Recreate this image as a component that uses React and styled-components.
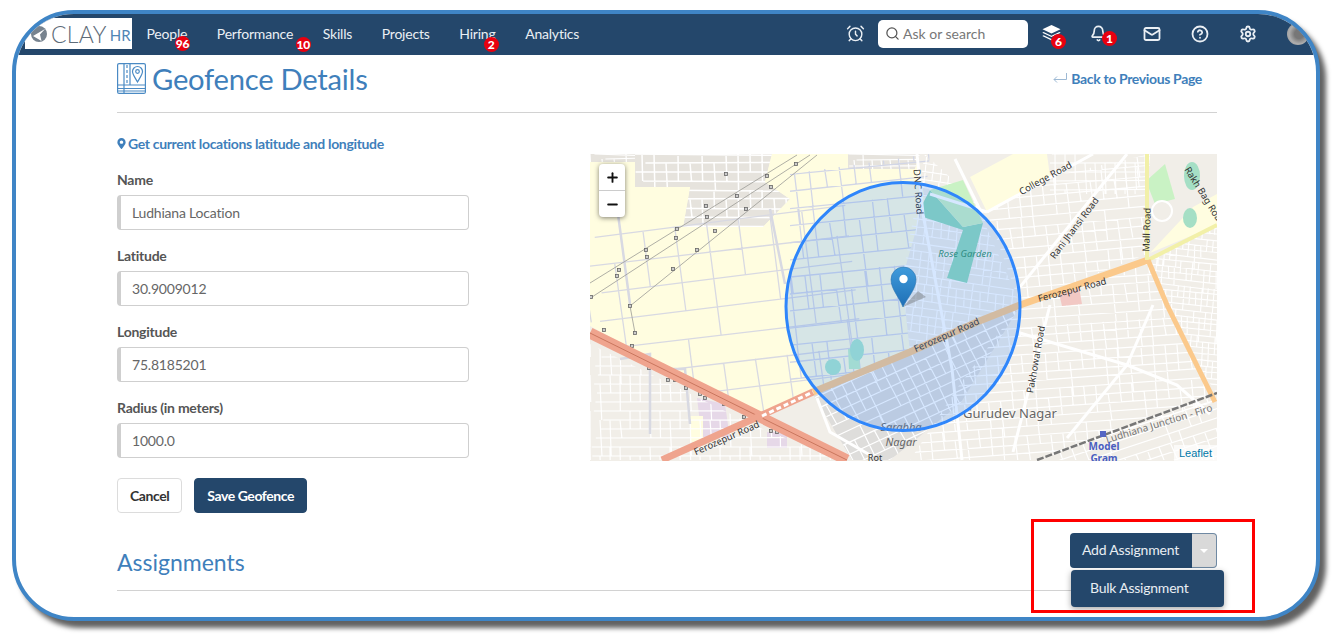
import React from "react"
import styled, { createGlobalStyle } from "styled-components"
import { AlarmClock, Bell, CircleHelp, Mail, Minus, Plus, Search, Settings } from "lucide-react"
import { FaMapMarkerAlt } from "react-icons/fa"

const navy = "#24476b"
const blue = "#3f7fbb"

const GlobalStyle = createGlobalStyle`
  html, body {
    margin: 0;
    background: #fff;
    font-family: "Lato", "Open Sans", sans-serif;
  }
`

const Page = styled.div`
  width: 1336px;
  height: 637px;
  padding: 10px 0 0 12px;
  box-sizing: border-box;
  overflow: hidden;
`

const Frame = styled.div`
  width: 1308px;
  height: 611px;
  box-sizing: border-box;
  border: 4px solid #3f85c6;
  border-radius: 62px;
  background: #fff;
  box-shadow: 6px 7px 5px rgba(0, 0, 0, 0.62);
  overflow: hidden;
`

const Nav = styled.header`
  display: flex;
  align-items: center;
  height: 41px;
  padding: 0 0 2px 9px;
  box-sizing: border-box;
  background: ${navy};
  color: #eaeff4;
  font-size: 14px;
  letter-spacing: -0.2px;
`

const Logo = styled.div`
  display: flex;
  align-items: center;
  width: 107px;
  height: 31px;
  padding-left: 6px;
  box-sizing: border-box;
  background: #fff;
  margin-right: 14.5px;
  letter-spacing: 0;
`

const LogoClay = styled.span`
  margin-left: 4px;
  font-size: 23px;
  font-weight: 300;
  letter-spacing: 0.3px;
  color: #5d6b78;
`

const LogoHr = styled.span`
  margin-left: 3px;
  margin-top: 3px;
  font-size: 15px;
  font-weight: 400;
  color: #4f86b5;
`

const NavLinks = styled.nav`
  display: flex;
  gap: 29.6px;
`

const NavLink = styled.span`
  position: relative;
  line-height: 20px;
`

const Badge = styled.span`
  position: absolute;
  right: ${p => p.$right}px;
  top: ${p => p.$top}px;
  min-width: 15px;
  height: 15px;
  padding: 0 1px;
  box-sizing: border-box;
  border-radius: 8px;
  background: #e8000f;
  color: #fff;
  font-size: 12px;
  font-weight: 900;
  letter-spacing: -0.2px;
  line-height: 15px;
  text-align: center;
`

const NavTools = styled.div`
  display: flex;
  align-items: center;
  margin-left: auto;
  margin-right: -4px;
`

const ToolSlot = styled.span`
  position: relative;
  display: flex;
  align-items: center;
  justify-content: center;
  width: ${p => p.$width || 48}px;
  padding-right: ${p => p.$shift || 0}px;
  box-sizing: border-box;
`

const SearchBox = styled.div`
  display: flex;
  align-items: center;
  gap: 3px;
  width: 150px;
  height: 28px;
  padding-left: 7px;
  margin: 0 -1px 0 13px;
  box-sizing: border-box;
  border-radius: 5px;
  background: #fff;
  color: #777;
  font-size: 14px;
  letter-spacing: 0;
`

const Avatar = styled.span`
  width: 22px;
  height: 22px;
  margin-left: 4px;
  border-radius: 50%;
  background: radial-gradient(circle at 55% 50%, #777 0 28%, #adadad 60%, #949494);
`

const Content = styled.main`
  padding: 0 99px 0 101px;
`

const TitleRow = styled.div`
  display: flex;
  align-items: center;
  justify-content: space-between;
  height: 58px;
  padding: 0 15px 11px 0;
  box-sizing: border-box;
  border-bottom: 1px solid #d2d2d2;
`

const Title = styled.h1`
  display: flex;
  align-items: center;
  gap: 6px;
  margin: 0;
  color: ${blue};
  font-size: 29.2px;
  font-weight: 400;
  letter-spacing: -0.25px;
`

const BackLink = styled.a`
  display: flex;
  align-items: center;
  gap: 4px;
  color: ${blue};
  font-size: 14px;
  font-weight: 700;
  letter-spacing: -0.35px;
`

const Columns = styled.div`
  display: flex;
  justify-content: space-between;
`

const FormColumn = styled.form`
  width: 352px;
  margin: 20px 0 0;
`

const LocateLink = styled.a`
  display: flex;
  align-items: center;
  gap: 1px;
  height: 20px;
  margin-bottom: 17px;
  color: ${blue};
  font-size: 14px;
  font-weight: 700;
  letter-spacing: -0.34px;

  svg {
    margin-left: -1px;
  }
`

const Label = styled.label`
  display: block;
  margin: 0 0 5px;
  color: #555;
  font-size: 14px;
  font-weight: 700;
  line-height: 20px;
  letter-spacing: -0.25px;
`

const TextInput = styled.input`
  display: block;
  width: 100%;
  height: 35px;
  padding: 0 0 0 11px;
  margin-bottom: 16px;
  box-sizing: border-box;
  border: 1px solid #cfcfcf;
  border-left: 4px solid #cfcfcf;
  border-radius: 4px;
  color: #666;
  font: 400 14px "Lato", sans-serif;
  letter-spacing: -0.2px;
`

const Buttons = styled.div`
  display: flex;
  gap: 12px;
  margin-top: 20px;
`

const Button = styled.button`
  height: 35px;
  padding: 0 12px;
  border: 1px solid ${p => (p.$primary ? navy : "#dcdcdc")};
  border-radius: 4px;
  background: ${p => (p.$primary ? navy : "#fff")};
  color: ${p => (p.$primary ? "#fff" : "#333")};
  font: 700 14px "Lato", sans-serif;
  letter-spacing: -0.43px;
`

const MapBox = styled.div`
  position: relative;
  width: 627px;
  height: 307px;
  margin-top: 41px;
  overflow: hidden;
  background: #f1eee8;

  svg {
    display: block;
  }
`

const ZoomControl = styled.div`
  position: absolute;
  left: 9px;
  top: 10px;
  width: 26px;
  border-radius: 4px;
  background: #fff;
  box-shadow: 0 1px 5px rgba(0, 0, 0, 0.5);

  svg {
    color: #111;
  }
`

const ZoomButton = styled.span`
  display: flex;
  align-items: center;
  justify-content: center;
  height: 26px;
  border-bottom: ${p => (p.$last ? "none" : "1px solid #ccc")};
`

const Attribution = styled.a`
  position: absolute;
  right: 0;
  bottom: 0;
  padding: 0 5px;
  background: rgba(255, 255, 255, 0.7);
  color: #0078a8;
  font: 11px/16px "Liberation Sans", sans-serif;
`

const SectionRow = styled.div`
  display: flex;
  justify-content: space-between;
  height: 58px;
  margin-top: 20px;
  box-sizing: border-box;
  border-bottom: 1px solid #d2d2d2;
`

const SectionTitle = styled.h2`
  align-self: flex-end;
  margin: 0 0 13px;
  color: ${blue};
  font-size: 23px;
  font-weight: 400;
  line-height: 30px;
`

const SplitButton = styled.div`
  position: relative;
  display: flex;
  height: 35px;
`

const SplitMain = styled.span`
  display: flex;
  align-items: center;
  width: 122px;
  padding: 0 0 2px 12px;
  box-sizing: border-box;
  border-radius: 4px 0 0 4px;
  background: ${navy};
  color: #e9eef3;
  font-size: 14px;
  letter-spacing: -0.2px;
`

const SplitCaret = styled.span`
  display: flex;
  align-items: center;
  justify-content: center;
  width: 25px;
  box-sizing: border-box;
  border: 1px solid #6f89a3;
  border-left: none;
  border-radius: 0 4px 4px 0;
  background: #d9d9d9;

  &::after {
    content: "";
    border: 4px solid transparent;
    border-top-color: #fff;
    border-bottom: none;
  }
`

const DropMenu = styled.div`
  position: absolute;
  left: 1px;
  top: 37px;
  width: 153px;
  height: 37px;
  padding-left: 19px;
  box-sizing: border-box;
  border-radius: 4px;
  background: ${navy};
  box-shadow: 0 2px 6px rgba(0, 0, 0, 0.35);
  color: #e9eef3;
  font-size: 14px;
  line-height: 36px;
  letter-spacing: -0.22px;
`

const Highlight = styled.div`
  position: absolute;
  left: -39px;
  top: -14px;
  width: 224px;
  height: 94px;
  box-sizing: border-box;
  border: 3.5px solid #ff0000;
  pointer-events: none;
`

const MapText = styled.text`
  font-family: "Noto Sans", "Open Sans", sans-serif;
  font-size: ${p => p.$size || 9.5}px;
  font-style: ${p => (p.$italic ? "italic" : "normal")};
  font-weight: ${p => (p.$bold ? 700 : 400)};
  fill: ${p => p.$color || "#333"};
  stroke: ${p => p.$halo || "none"};
  stroke-width: 2px;
  paint-order: stroke;
  text-anchor: middle;
`

// small repeatable noise so the street grid stays the same on every load
const noise = n => {
  const v = Math.sin(n * 127.1 + 11.7) * 43758.5453
  return v - Math.floor(v)
}

const gridPath = (x, y, w, h, sx, sy, seed = 1) => {
  let d = ""
  let i = 0
  for (let py = y; py < y + h; py += sy) {
    i++
    const tilt = noise(seed + i) * 3 - 1.5
    const start = x + noise(seed + i * 2) * sx * 1.5
    d += `M${start} ${py}L${x + w} ${py + tilt}`
  }
  for (let px = x; px < x + w; px += sx) {
    for (let py = y; py < y + h; py += sy * 4) {
      i++
      const from = py + Math.floor(noise(seed + i) * 2) * sy
      const to = from + (2 + Math.floor(noise(seed + i * 3) * 3)) * sy
      d += `M${px} ${from}L${px + noise(seed + i) * 2} ${to}`
    }
  }
  return d
}

const polyPoints = pts => pts.map(p => p.join(",")).join(" ")

const yellowAreas = [
  [[0, 0], [325, 0], [335, 45], [312, 125], [320, 198], [223, 238], [170, 264], [0, 172]],
  [[380, 23], [423, 0], [457, 0], [460, 23], [397, 58]],
  [[560, 99], [603, 53], [627, 40], [627, 71]],
]

const blocks = [
  { id: "a", pts: [[45, 0], [182, 0], [175, 28], [200, 45], [173, 73], [93, 73], [100, 33], [45, 33]], x: 40, y: 0, w: 170, h: 80, sx: 12, sy: 9, color: "#fff", sw: 1.5 },
  { id: "b", pts: [[258, 0], [330, 0], [325, 15], [258, 15]], x: 255, y: 0, w: 80, h: 18, sx: 9, sy: 6, color: "#fff", sw: 1.2 },
  { id: "c", pts: [[0, 0], [45, 0], [45, 8], [0, 8]], x: 0, y: 0, w: 45, h: 8, sx: 12, sy: 5, color: "#fff", sw: 1.2 },
]

const streets = [
  { id: "yl", pts: yellowAreas[0], x: -30, y: 70, w: 300, h: 220, sx: 32, sy: 28, color: "#d8d9e2", sw: 1.3, rotate: -7 },
  { id: "cy", pts: [[200, 20], [340, 0], [335, 45], [312, 125], [320, 198], [200, 240]], x: 170, y: -20, w: 190, h: 280, sx: 15, sy: 17, color: "#d2d6e6", sw: 1.3, rotate: -6, seed: 5 },
  { id: "n", pts: [[335, 0], [400, 60], [395, 70], [430, 150], [320, 198], [312, 125]], x: 290, y: 0, w: 170, h: 220, sx: 8, sy: 8, color: "#fff", sw: 1.1, rotate: 8, seed: 9 },
  { id: "ne", pts: [[397, 58], [460, 23], [560, 0], [557, 100], [430, 150]], x: 360, y: -20, w: 220, h: 190, sx: 12, sy: 10, color: "#fff", sw: 1.2, rotate: -5, seed: 12 },
  { id: "e", pts: [[558, 106], [627, 71], [627, 240], [600, 200]], x: 550, y: 60, w: 90, h: 190, sx: 6, sy: 6, color: "#fff", sw: 1.1, rotate: 6, seed: 16 },
  { id: "se", pts: [[430, 151], [558, 106], [625, 248], [447, 306], [320, 306], [370, 230]], x: 300, y: 90, w: 340, h: 240, sx: 12, sy: 9, color: "#fff", sw: 1.2, rotate: -4, seed: 19 },
  { id: "s", pts: [[223, 240], [430, 152], [370, 250], [300, 306], [262, 306]], x: 170, y: 110, w: 320, h: 240, sx: 11, sy: 11, color: "#fff", sw: 1.2, rotate: -25, seed: 22 },
  { id: "sw", pts: [[0, 190], [165, 272], [250, 306], [0, 306]], x: 0, y: 185, w: 260, h: 125, sx: 10, sy: 9, color: "#fff", sw: 1.2, seed: 28 },
  { id: "br", pts: [[447, 306], [627, 239], [627, 306]], x: 430, y: 220, w: 220, h: 110, sx: 12, sy: 9, color: "#fff", sw: 1.2, rotate: -18, seed: 31 },
  { id: "top", pts: [[460, 0], [560, 0], [557, 40], [460, 40]], x: 455, y: 0, w: 110, h: 45, sx: 10, sy: 9, color: "#fff", sw: 1.1, seed: 35 },
]

const lightRoads = [
  "M327 0L333 60L350 151L362 215L372 306",
  "M397 58L503 0",
  "M430 133L537 0",
  "M460 151L423 298",
  "M477 284L537 211L563 151",
  "M430 179L537 211L587 231L620 260",
  "M227 244L240 278L280 301",
  "M392 60L365 5",
  "M340 40L397 58",
]

const greyRoads = ["M24 30L40 150", "M180 55L195 130", "M30 205L60 200L60 280", "M70 215L95 215L100 270"]

const railDots = [
  [1, 143], [27, 122], [29, 116], [56, 96], [57, 103], [86, 84], [87, 75], [116, 52], [117, 63], [125, 77],
  [147, 42], [156, 55], [177, 22], [181, 33], [136, 20], [206, 10], [40, 152], [83, 115], [107, 96],
  [14, 176], [45, 179], [42, 192], [51, 202], [59, 214], [78, 226], [85, 226], [96, 234], [110, 240], [115, 244], [134, 250], [154, 263], [163, 266], [181, 277], [187, 278], [196, 279],
]

const labels = [
  { t: "College Road", x: 457, y: 27, r: -29 },
  { t: "DNC Road", x: 325, y: 38, r: 86 },
  { t: "Rani Jhansi Road", x: 487, y: 76, r: -53 },
  { t: "Mall Road", x: 560, y: 76, r: -88 },
  { t: "Rakh Bag Road", x: 612, y: 44, r: 58 },
  { t: "Rose Garden", x: 375, y: 103, $italic: true, $color: "#2f8f63" },
  { t: "Ferozepur Road", x: 483, y: 139, r: -15 },
  { t: "Ferozepur Road", x: 358, y: 184, r: -24 },
  { t: "Ferozepur Road", x: 138, y: 287, r: -24 },
  { t: "Pakhowal Road", x: 449, y: 206, r: -80 },
  { t: "Gurudev Nagar", x: 420, y: 264, $size: 13, $color: "#666", $halo: "rgba(255,255,255,.5)" },
  { t: "Sarabha", x: 311, y: 277, $size: 11, $italic: true, $color: "#666" },
  { t: "Nagar", x: 311, y: 292, $size: 11, $italic: true, $color: "#666" },
  { t: "Rot", x: 285, y: 307, $size: 9 },
  { t: "Ludhiana Junction - Firo", x: 570, y: 273, r: -17, $size: 10, $color: "#777" },
  { t: "Model", x: 514, y: 296, $bold: true, $size: 10, $color: "#4a5ec0" },
  { t: "Gram", x: 514, y: 308, $bold: true, $size: 10, $color: "#4a5ec0" },
]

const MapDrawing = () => (
  <svg width="627" height="307" viewBox="0 0 627 307">
    <defs>
      {[...streets, ...blocks].map(s => (
        <clipPath id={`clip-${s.id}`} key={s.id}>
          <polygon points={polyPoints(s.pts)} />
        </clipPath>
      ))}
      <linearGradient id="pin" x1="0" y1="0" x2="0" y2="1">
        <stop offset="0" stopColor="#3f9bdc" />
        <stop offset="1" stopColor="#1f6fb5" />
      </linearGradient>
    </defs>

    {yellowAreas.map((pts, i) => (
      <polygon key={i} points={polyPoints(pts)} fill="#fffde0" />
    ))}
    <polygon points="223,240 430,152 370,250 300,306 262,306" fill="#dedddb" />
    {blocks.map(b => (
      <g key={b.id} clipPath={`url(#clip-${b.id})`}>
        <polygon points={polyPoints(b.pts)} fill="#e6e3dd" />
        <path d={gridPath(b.x, b.y, b.w, b.h, b.sx, b.sy, 3)} fill="none" stroke={b.color} strokeWidth={b.sw} />
      </g>
    ))}

    <polygon points="107,244 135,250 140,285 112,285" fill="#e6d8e8" />
    <polygon points="177,278 197,278 197,294 177,294" fill="#e6d8e8" />
    <polygon points="100,262 113,262 113,288 100,288" fill="#fffde0" />

    {streets.map(s => (
      <g key={s.id} clipPath={`url(#clip-${s.id})`}>
        <path
          d={gridPath(s.x, s.y, s.w, s.h, s.sx, s.sy, s.seed || 2)}
          transform={s.rotate ? `rotate(${s.rotate} ${s.x + s.w / 2} ${s.y + s.h / 2})` : undefined}
          fill="none"
          stroke={s.color}
          strokeWidth={s.sw}
        />
      </g>
    ))}

    <polygon points="333,49 340,36 373,73 393,69 377,129 357,124 373,76 333,63" fill="#8fd9bb" />
    <polygon points="340,36 373,26 393,69 373,73" fill="#c9f2c4" />
    <polygon points="258,195 269,195 270,215 259,215" fill="#bff0c8" />
    <ellipse cx="243" cy="213" rx="8" ry="8" fill="#a8e6cc" />
    <ellipse cx="267" cy="196" rx="7" ry="11" fill="#a8e6cc" />
    <polygon points="556,27 575,10 585,45 565,50" fill="#c9f2c4" />
    <ellipse cx="602" cy="22" rx="8" ry="14" fill="#a5dfc5" />
    <ellipse cx="600" cy="64" rx="7" ry="10" fill="#a5dfc5" />
    <ellipse cx="572" cy="57" rx="10" ry="10" fill="#f1eee8" stroke="#fff" strokeWidth="2" />
    <polygon points="468,135 488,128 492,150 472,152" fill="#f2c8c4" />

    {greyRoads.map((d, i) => (
      <path key={i} d={d} fill="none" stroke="#d8d9e2" strokeWidth="2.5" />
    ))}
    {lightRoads.map((d, i) => (
      <path key={i} d={d} fill="none" stroke="#fff" strokeWidth="3" />
    ))}

    <g fill="none" stroke="#9a9a96" strokeWidth="0.8">
      <path d="M0 129L207 1" />
      <path d="M2 143L220 1" />
      <path d="M40 152L227 1" />
      <path d="M40 152L45 179" />
    </g>
    <g fill="#ccc" stroke="#666" strokeWidth="0.8">
      {railDots.map(([x, y]) => (
        <rect key={`${x}-${y}`} x={x - 1.5} y={y - 1.5} width="3" height="3" />
      ))}
    </g>

    <path d="M0 179L257 306" stroke="#efa48e" strokeWidth="11" fill="none" />
    <path d="M0 179L257 306" stroke="#c9765e" strokeWidth="1" fill="none" />
    <path d="M72 306L223 238" stroke="#efa48e" strokeWidth="7" fill="none" />
    <path d="M223 238L320 198L387 168L430 151L558 106" stroke="#fbc98b" strokeWidth="7" fill="none" />
    <path d="M172 262L223 238" stroke="#fff" strokeWidth="3" strokeDasharray="5 3" fill="none" />
    <path d="M558 106L627 71" stroke="#f2f0a8" strokeWidth="4" fill="none" />
    <path d="M557 0L557 106" stroke="#f2f0a8" strokeWidth="4" fill="none" />
    <path d="M558 106L577 151L625 248" stroke="#fbc98b" strokeWidth="5" fill="none" />
    <path d="M447 306L627 239" stroke="#777" strokeWidth="2.5" strokeDasharray="7 2" fill="none" />
    <rect x="510" y="277" width="6" height="6" fill="#5566c4" />

    {labels.map(({ t, x, y, r, ...rest }) => (
      <MapText key={t + x} x={x} y={y} transform={r ? `rotate(${r} ${x} ${y})` : undefined} {...rest}>
        {t}
      </MapText>
    ))}

    <ellipse cx="313" cy="152.5" rx="117" ry="124" fill="#3388ff" fillOpacity="0.2" stroke="#2f86fb" strokeWidth="3" />

    <polygon points="313,153 328,137 336,143" fill="#555" opacity="0.35" />
    <path
      d="M313 153C309 143 301 135 301 125.5A12.5 12.5 0 0 1 326 125.5C326 135 318 143 313 153Z"
      fill="url(#pin)"
      stroke="#2a73b0"
      strokeWidth="0.6"
    />
    <circle cx="313.5" cy="125" r="4.2" fill="#fff" />
  </svg>
)

const StackIcon = () => (
  <svg width="19" height="17" viewBox="0 0 19 17" fill="#fff">
    <path d="M9.5 0L18.5 4.2L9.5 8.4L.5 4.2Z" />
    <path d="M1.6 7L9.5 10.7L17.4 7L18.7 7.7L9.5 12L.3 7.7Z" />
    <path d="M1.6 10.3L9.5 14L17.4 10.3L18.7 11L9.5 15.4L.3 11Z" />
  </svg>
)

const MapBookIcon = () => (
  <svg width="29" height="31" viewBox="0 0 29 31" fill="none" stroke="#4a8ac4" strokeWidth="1.2">
    <rect x=".6" y=".6" width="27.8" height="29.8" rx="1.5" />
    <path d="M7 .6V30.4M13 .6V22M.6 22H28.4M.6 25.5H28.4M.6 28H28.4" />
    <path d="M10 2V20" strokeDasharray="3 2" />
    <path d="M20.5 19C18 14.5 15.5 11.5 15.5 8.5A5 5 0 0 1 25.5 8.5C25.5 11.5 23 14.5 20.5 19Z" />
    <circle cx="20.5" cy="8.5" r="1.8" />
  </svg>
)

const BackArrow = () => (
  <svg width="14" height="10" viewBox="0 0 14 10" fill="none" stroke="#9db9d4" strokeWidth="1">
    <path d="M13.5 0V6.5H1M4 3.5L1 6.5L4 9.5" />
  </svg>
)

const LogoMark = () => (
  <svg width="16" height="16" viewBox="0 0 16 16">
    <circle cx="8" cy="8" r="8" fill="#77838f" />
    <path d="M2 10L14 3L9 8.5L10.5 15Z" fill="#fff" />
  </svg>
)

const navLinks = [
  { label: "People", badge: "96", right: -3, top: 12 },
  { label: "Performance", badge: "10", right: -18, top: 13 },
  { label: "Skills" },
  { label: "Projects" },
  { label: "Hiring", badge: "2", right: -3, top: 13 },
  { label: "Analytics" },
]

const fields = [
  { label: "Name", value: "Ludhiana Location" },
  { label: "Latitude", value: "30.9009012" },
  { label: "Longitude", value: "75.8185201" },
  { label: "Radius (in meters)", value: "1000.0" },
]

const App = () => {
  return (
    <Page>
      <GlobalStyle />
      <Frame>
        <Nav>
          <Logo>
            <LogoMark />
            <LogoClay>CLAY</LogoClay>
            <LogoHr>HR</LogoHr>
          </Logo>
          <NavLinks>
            {navLinks.map(link => (
              <NavLink key={link.label}>
                {link.label}
                {link.badge && (
                  <Badge $right={link.right} $top={link.top}>
                    {link.badge}
                  </Badge>
                )}
              </NavLink>
            ))}
          </NavLinks>
          <NavTools>
            <AlarmClock size={19} strokeWidth={1.8} />
            <SearchBox>
              <Search size={15} strokeWidth={2} color="#555" />
              Ask or search
            </SearchBox>
            <ToolSlot>
              <StackIcon />
              <Badge $right={9} $top={9}>6</Badge>
            </ToolSlot>
            <ToolSlot $width={53} $shift={6}>
              <Bell size={17} strokeWidth={2.4} />
              <Badge $right={11} $top={6}>1</Badge>
            </ToolSlot>
            <ToolSlot>
              <Mail size={18} strokeWidth={2.4} />
            </ToolSlot>
            <ToolSlot>
              <CircleHelp size={18} strokeWidth={2.4} />
            </ToolSlot>
            <ToolSlot>
              <Settings size={18} strokeWidth={2.4} />
            </ToolSlot>
            <ToolSlot>
              <Avatar />
            </ToolSlot>
          </NavTools>
        </Nav>
        <Content>
          <TitleRow>
            <Title>
              <MapBookIcon />
              Geofence Details
            </Title>
            <BackLink>
              <BackArrow />
              Back to Previous Page
            </BackLink>
          </TitleRow>
          <Columns>
            <FormColumn>
              <LocateLink>
                <FaMapMarkerAlt size={11} />
                Get current locations latitude and longitude
              </LocateLink>
              {fields.map(field => (
                <React.Fragment key={field.label}>
                  <Label>{field.label}</Label>
                  <TextInput value={field.value} readOnly />
                </React.Fragment>
              ))}
              <Buttons>
                <Button type="button">Cancel</Button>
                <Button type="button" $primary>Save Geofence</Button>
              </Buttons>
            </FormColumn>
            <MapBox>
              <MapDrawing />
              <ZoomControl>
                <ZoomButton>
                  <Plus size={15} strokeWidth={3} />
                </ZoomButton>
                <ZoomButton $last>
                  <Minus size={15} strokeWidth={3} />
                </ZoomButton>
              </ZoomControl>
              <Attribution>Leaflet</Attribution>
            </MapBox>
          </Columns>
          <SectionRow>
            <SectionTitle>Assignments</SectionTitle>
            <SplitButton>
              <SplitMain>Add Assignment</SplitMain>
              <SplitCaret />
              <DropMenu>Bulk Assignment</DropMenu>
              <Highlight />
            </SplitButton>
          </SectionRow>
        </Content>
      </Frame>
    </Page>
  )
}

export default App
